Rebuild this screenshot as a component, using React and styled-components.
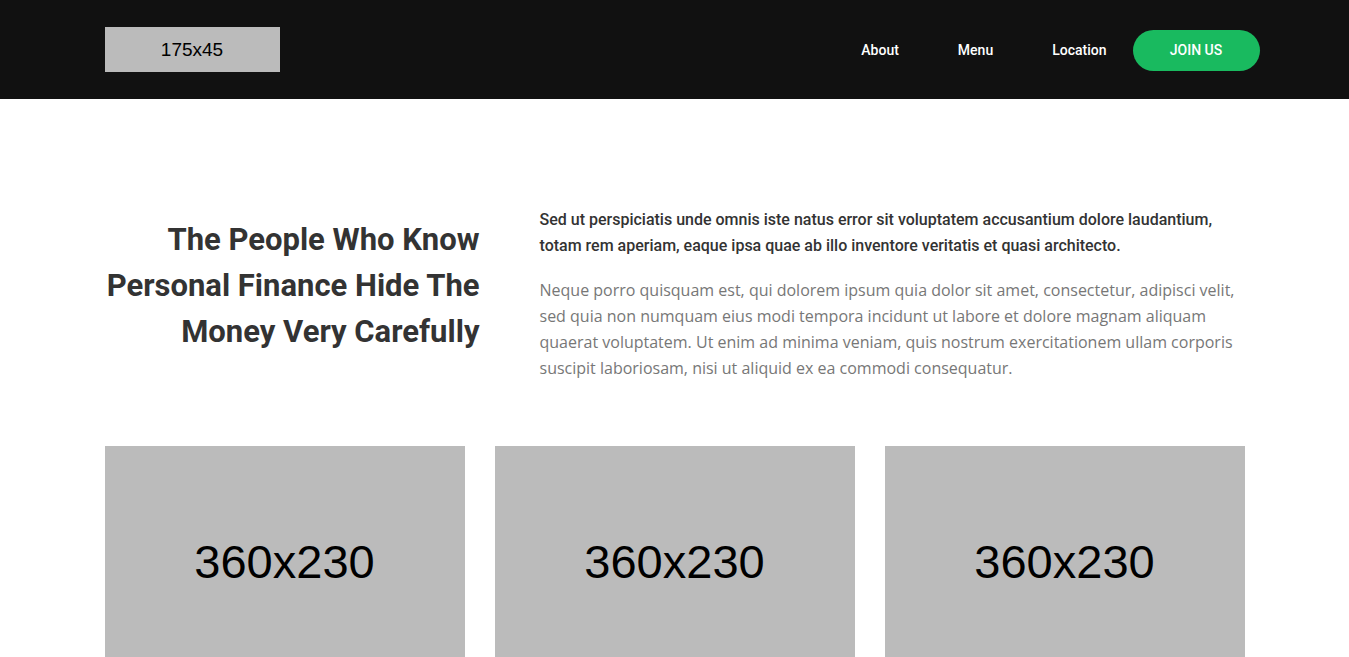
import React from "react";
import styled, { createGlobalStyle } from "styled-components";

const Global = createGlobalStyle`
  html, body { margin: 0; padding: 0; background: #fff; }
  body { font-family: Roboto, "Liberation Sans", Arial, sans-serif; }
  * { box-sizing: border-box; }
`;

const Header = styled.header`
  background: #111111;
  height: 99px;
`;

const Container = styled.div`
  width: 1140px;
  margin: 0 auto;
`;

const HeaderInner = styled(Container)`
  height: 100%;
  display: flex;
  align-items: center;
  justify-content: space-between;
`;

const Placeholder = styled.div`
  width: ${(p) => p.$w}px;
  height: ${(p) => p.$h}px;
  background: #bbbbbb;
  color: #000;
  display: flex;
  align-items: center;
  justify-content: center;
  font-family: "Liberation Sans", Arial, sans-serif;
  font-size: ${(p) => p.$fs}px;
`;

const Nav = styled.nav`
  display: flex;
  align-items: center;
  margin-right: -15px;
  margin-top: 1px;
`;

const NavLink = styled.a`
  color: #fff;
  font-family: Roboto, sans-serif;
  font-weight: 500;
  font-size: 14px;
  text-decoration: none;
  margin-left: ${(p) => p.$ml}px;
`;

const JoinButton = styled.a`
  margin-left: 26px;
  width: 127px;
  height: 41px;
  border-radius: 21px;
  background: #19ba5f;
  color: #fff;
  font-family: Roboto, sans-serif;
  font-weight: 500;
  font-size: 14px;
  display: flex;
  align-items: center;
  justify-content: center;
  text-decoration: none;
`;

const Section = styled.section`
  padding-top: 108px;
`;

const Intro = styled.div`
  display: grid;
  grid-template-columns: 375px 1fr;
  column-gap: 60px;
  align-items: start;
  margin-bottom: 65px;
`;

const Heading = styled.h2`
  margin: 10px 0 0;
  text-align: right;
  font-family: Roboto, sans-serif;
  font-weight: 700;
  font-size: 31px;
  line-height: 46px;
  color: #333;
`;

const Lead = styled.p`
  margin: 0 0 18px;
  font-family: Roboto, sans-serif;
  font-weight: 500;
  font-size: 16px;
  line-height: 26px;
  color: #333;
`;

const Body = styled.p`
  margin: 0;
  font-family: "Open Sans", sans-serif;
  font-size: 16px;
  line-height: 26px;
  color: #777;
`;

const Cards = styled.div`
  display: grid;
  grid-template-columns: repeat(3, 360px);
  column-gap: 30px;
`;

export default function App() {
  return (
    <>
      <Global />
      <Header>
        <HeaderInner>
          <Placeholder $w={175} $h={45} $fs={19}>175x45</Placeholder>
          <Nav>
            <NavLink href="#">About</NavLink>
            <NavLink href="#" $ml={59}>Menu</NavLink>
            <NavLink href="#" $ml={59}>Location</NavLink>
            <JoinButton href="#">JOIN US</JoinButton>
          </Nav>
        </HeaderInner>
      </Header>
      <Section>
        <Container>
          <Intro>
            <Heading>
              The People Who Know Personal Finance Hide The Money Very Carefully
            </Heading>
            <div>
              <Lead>
                Sed ut perspiciatis unde omnis iste natus error sit voluptatem accusantium dolore laudantium,
                totam rem aperiam, eaque ipsa quae ab illo inventore veritatis et quasi architecto.
              </Lead>
              <Body>
                Neque porro quisquam est, qui dolorem ipsum quia dolor sit amet, consectetur, adipisci velit,
                sed quia non numquam eius modi tempora incidunt ut labore et dolore magnam aliquam
                quaerat voluptatem. Ut enim ad minima veniam, quis nostrum exercitationem ullam corporis
                suscipit laboriosam, nisi ut aliquid ex ea commodi consequatur.
              </Body>
            </div>
          </Intro>
          <Cards>
            <Placeholder $w={360} $h={230} $fs={47}>360x230</Placeholder>
            <Placeholder $w={360} $h={230} $fs={47}>360x230</Placeholder>
            <Placeholder $w={360} $h={230} $fs={47}>360x230</Placeholder>
          </Cards>
        </Container>
      </Section>
    </>
  );
}
